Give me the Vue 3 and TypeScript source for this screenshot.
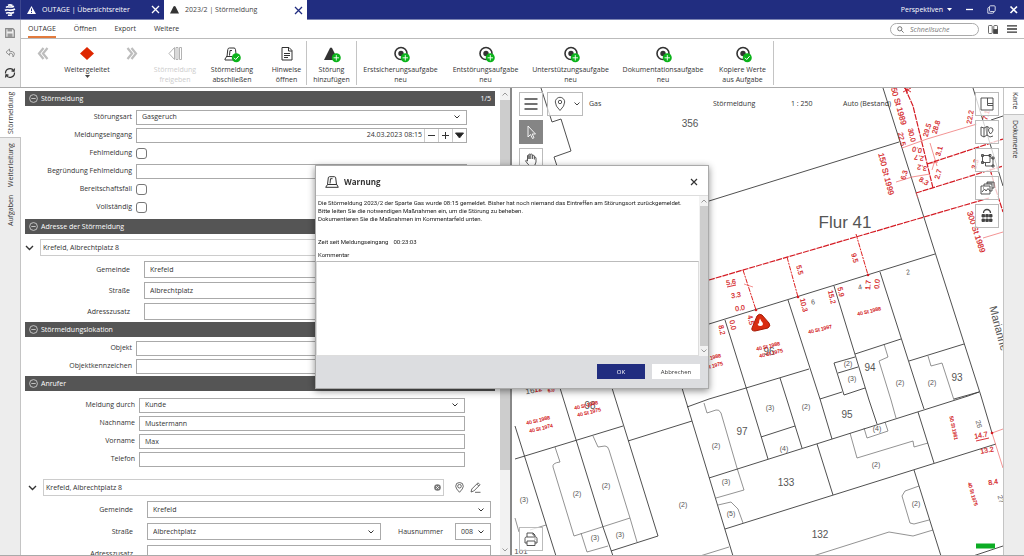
<script setup lang="ts">
import { ref } from 'vue'

interface Tool {
  icon: string
  lines: string[]
  disabled?: boolean
  drop?: boolean
  badge?: 'plus' | 'check'
  end?: boolean
}
interface MapLabel {
  x: number
  y: number
  t: string
  s: number
  r: number
}

const tools: Tool[] = [
  { icon: 'back', lines: [], disabled: true },
  { icon: 'diamond', lines: ['Weitergeleitet'], drop: true },
  { icon: 'forward', lines: [], disabled: true },
  { icon: 'release', lines: ['Störmeldung', 'freigeben'], disabled: true },
  { icon: 'siren', lines: ['Störmeldung', 'abschließen'], badge: 'check' },
  { icon: 'doc', lines: ['Hinweise', 'öffnen'], end: true },
  { icon: 'tri', lines: ['Störung', 'hinzufügen'], badge: 'plus', end: true },
  { icon: 'target', lines: ['Erstsicherungsaufgabe', 'neu'], badge: 'plus' },
  { icon: 'target', lines: ['Entstörungsaufgabe', 'neu'], badge: 'plus' },
  { icon: 'target', lines: ['Unterstützungsaufgabe', 'neu'], badge: 'plus' },
  { icon: 'target', lines: ['Dokumentationsaufgabe', 'neu'], badge: 'plus' },
  { icon: 'target', lines: ['Kopiere Werte', 'aus Aufgabe'], badge: 'check', end: true },
]

const search = ref('')
const comment = ref('')
const dialogOpen = ref(true)
const kind = ref('Gasgeruch')
const received = ref('24.03.2023 08:15')
const falseAlarm = ref(false)
const reason = ref('')
const standby = ref(false)
const complete = ref(false)
const address = ref('Krefeld, Albrechtplatz 8')
const callerAddress = ref('Krefeld, Albrechtplatz 8')

const parcels: string[] = [
  'M541 88 552 122 561 119 571 151 554 157 557 166',
  'M709 201 899 142',
  'M883 88 933 246 981 396 992 433',
  'M973 88 1003 186',
  'M991 120 1003 116',
  'M709 324 935 254',
  'M725 320 750 400 768 459',
  'M788 300 820 399 832 439',
  'M834 286 869 400 877 424',
  'M880 272 921 400 924 409',
  'M687 407 709 399 746 388 809 369',
  'M820 399 842 392',
  'M858 367 838 373M855 357 834 363 844 395 865 388',
  'M855 354 901 339',
  'M909 361 964 344',
  'M954 399 979 392',
  'M780 378 787 400 802 448',
  'M709 478 968 396 979 392',
  'M725 529 996 444',
  'M682 388 733 556',
  'M817 444 833 495',
  'M761 437 795 426',
  'M918 412 934 463',
  'M914 470 941 556',
  'M973 556 1003 546',
  'M515 426 556 556',
  'M515 459 623 426',
  'M560 388 603 527 613 556',
  'M612 388 658 536 611 551',
  'M628 441 692 421',
]
const buildings: string[] = [
  'M884 344 888 357 879 361 891 400 896 418',
  'M928 356 931 366 942 363 954 400',
  'M704 403 707 413 716 410Q719 409 721 413L737 468 744 490 716 498',
  'M718 505 731 502 738 509 743 523',
  'M850 433 857 458 913 441 914 447 928 443',
  'M864 428 867 438 888 431 885 422',
  'M919 486 905 491 902 496 910 523 914 524 929 520',
  'M813 556 889 532 913 536 933 530',
  'M700 556 729 547',
  'M555 447 560 462Q552 463 553 467L574 536 630 518',
  'M593 436 598 447 605 446Q608 446 609 450L630 518 637 542',
  'M581 533 587 552 608 546',
  'M515 518 519 532M530 530 546 525',
]
const mains: string[] = [
  'M709 280 989 198',
  'M916 193 1003 166',
  'M927 164 1003 139',
  'M905 88 913 106 933 188',
  'M990 169 996 190 1003 212',
]
const branches: string[] = [
  'M856 234 868 275',
  'M787 257 798 297',
  'M743 270 756 310',
]
const thin: string[] = [
  'M902 148 927 139 977 124',
  'M983 238 1003 232',
  'M992 433 1003 429',
  'M992 433 1003 468',
  'M896 182 912 177 930 174',
  'M744 284 753 287',
  'M916 193 918 198',
  'M927 164 938 162M930 143 937 166M932 170 935 160',
]
const blackLabels: MapLabel[] = [
  { x: 690, y: 123, t: '356', s: 10, r: 0 },
  { x: 845, y: 222, t: 'Flur 41', s: 17, r: 0 },
  { x: 813, y: 302, t: '6', s: 7, r: -10 },
  { x: 860, y: 287, t: '4', s: 7, r: -10 },
  { x: 908, y: 272, t: '2', s: 7, r: -10 },
  { x: 769, y: 351, t: '96', s: 10, r: 0 },
  { x: 590, y: 405, t: '98', s: 10, r: 0 },
  { x: 870, y: 367, t: '94', s: 10, r: 0 },
  { x: 957, y: 377, t: '93', s: 10, r: 0 },
  { x: 847, y: 414, t: '95', s: 10, r: 0 },
  { x: 742, y: 431, t: '97', s: 10, r: 0 },
  { x: 786, y: 482, t: '133', s: 10, r: 0 },
  { x: 820, y: 534, t: '132', s: 10, r: 0 },
  { x: 521, y: 551, t: '101', s: 8, r: 0 },
  { x: 530, y: 391, t: '16', s: 8, r: -10 },
  { x: 848, y: 363, t: '(2)', s: 7, r: 0 },
  { x: 852, y: 378, t: '(3)', s: 7, r: 0 },
  { x: 900, y: 382, t: '(2)', s: 7, r: 0 },
  { x: 932, y: 382, t: '(2)', s: 7, r: 0 },
  { x: 770, y: 407, t: '(3)', s: 7, r: 0 },
  { x: 806, y: 406, t: '(2)', s: 7, r: 0 },
  { x: 716, y: 445, t: '(2)', s: 7, r: 0 },
  { x: 784, y: 448, t: '(4)', s: 7, r: 0 },
  { x: 877, y: 428, t: '(4)', s: 7, r: 0 },
  { x: 876, y: 464, t: '(2)', s: 7, r: 0 },
  { x: 726, y: 481, t: '(3)', s: 7, r: 0 },
  { x: 731, y: 513, t: '(5)', s: 7, r: 0 },
  { x: 916, y: 503, t: '(2)', s: 7, r: 0 },
  { x: 524, y: 499, t: '(3)', s: 7, r: 0 },
  { x: 577, y: 493, t: '(2)', s: 7, r: 0 },
  { x: 606, y: 485, t: '(2)', s: 7, r: 0 },
  { x: 683, y: 504, t: '(2)', s: 7, r: 0 },
  { x: 595, y: 537, t: '(3)', s: 7, r: 0 },
  { x: 620, y: 534, t: '(3)', s: 7, r: 0 },
  { x: 979, y: 424, t: '26', s: 7, r: 74 },
  { x: 1001, y: 499, t: '27', s: 7, r: 74 },
]
const redLabels: MapLabel[] = [
  { x: 886, y: 174, t: '150 St 1999', s: 8, r: 76 },
  { x: 898, y: 104, t: '150 St 1989', s: 8, r: 74 },
  { x: 976, y: 232, t: '300 St 1989', s: 8, r: 72 },
  { x: 904, y: 175, t: '6.3', s: 7, r: -76 },
  { x: 902, y: 139, t: '22.5', s: 7, r: 76 },
  { x: 912, y: 135, t: '30.0', s: 7, r: 76 },
  { x: 927, y: 130, t: '29.5', s: 7, r: -74 },
  { x: 936, y: 127, t: '28.8', s: 7, r: -74 },
  { x: 970, y: 117, t: '22.2', s: 7, r: -80 },
  { x: 986, y: 115, t: '7.1', s: 7, r: -74 },
  { x: 917, y: 150, t: '0.0', s: 7, r: 190 },
  { x: 919, y: 158, t: '2.7', s: 7, r: 190 },
  { x: 922, y: 168, t: '3.2', s: 7, r: 190 },
  { x: 924, y: 181, t: '8.3', s: 7, r: 30 },
  { x: 939, y: 151, t: '3.1', s: 7, r: -74 },
  { x: 938, y: 174, t: '2.7', s: 7, r: -74 },
  { x: 975, y: 164, t: '3.3', s: 7, r: -74 },
  { x: 731, y: 282, t: '5.6', s: 7, r: -8 },
  { x: 736, y: 295, t: '3.3', s: 7, r: -8 },
  { x: 740, y: 308, t: '0.0', s: 7, r: -8 },
  { x: 800, y: 270, t: '5.5', s: 7, r: 74 },
  { x: 855, y: 258, t: '9.5', s: 7, r: 74 },
  { x: 868, y: 285, t: '1.7', s: 7, r: -84 },
  { x: 877, y: 284, t: '0.0', s: 7, r: -84 },
  { x: 832, y: 297, t: '15.2', s: 7, r: 76 },
  { x: 841, y: 292, t: '5.9', s: 7, r: 76 },
  { x: 804, y: 305, t: '10.3', s: 7, r: 76 },
  { x: 722, y: 330, t: '8.2', s: 7, r: 76 },
  { x: 733, y: 325, t: '0.0', s: 7, r: 76 },
  { x: 751, y: 320, t: '4.5', s: 7, r: 76 },
  { x: 869, y: 311, t: '40 St 1988', s: 5, r: -14 },
  { x: 820, y: 329, t: '40 St 1997', s: 5, r: -14 },
  { x: 768, y: 346, t: '40 St 1988', s: 5, r: -14 },
  { x: 771, y: 353, t: '40 St 1975', s: 5, r: -14 },
  { x: 709, y: 358, t: '40 St 1988', s: 5, r: -14 },
  { x: 711, y: 366, t: '40 St 1975', s: 5, r: -14 },
  { x: 538, y: 420, t: '40 St 1988', s: 5, r: -14 },
  { x: 541, y: 428, t: '40 St 1974', s: 5, r: -14 },
  { x: 586, y: 405, t: '40 St 1988', s: 5, r: -14 },
  { x: 589, y: 412, t: '40 St 1975', s: 5, r: -14 },
  { x: 954, y: 428, t: '50 St 1961', s: 5, r: 78 },
  { x: 973, y: 494, t: '40 St 1975', s: 5, r: 74 },
  { x: 981, y: 435, t: '14.7', s: 7, r: -10 },
  { x: 987, y: 450, t: '13.2', s: 7, r: -10 },
  { x: 993, y: 482, t: '8.4', s: 7, r: -10 },
  { x: 538, y: 389, t: '12', s: 7, r: -10 },
  { x: 551, y: 390, t: '6.0', s: 5, r: -10 },
]
const turn = (l: MapLabel): string => `rotate(${l.r} ${l.x} ${l.y})`
</script>

<template>
  <div class="app">
    <header class="titlebar">
      <div class="logo">
        <svg width="12" height="12" viewBox="0 0 12 12" fill="none" stroke="#fff" stroke-width="1.6">
          <path d="M2 3.5C4 1.5 5.500 4.500 10 2.200M1 6.500C4 4.200 6 8 11 5M2 9.200C5 7.500 6.500 10.500 10 8.300M4 1.300Q6 .4 8.500 1.500M4 11Q6 11.700 8 10.800" />
        </svg>
      </div>
      <div class="doc-tab">
        <svg width="9" height="8" viewBox="0 0 9 8"><path d="M4.500 0 9 8H0Z" fill="#fff" /><path d="M4.500 2.500V5.200M4.500 6V7" stroke="#212d80" /></svg>
        <span>OUTAGE | Übersichtsreiter</span>
        <button type="button" aria-label="Reiter schließen"><svg width="9" height="9" viewBox="0 0 9 9"><path d="M1 1 8 8M8 1 1 8" stroke="currentColor" stroke-width="1.300" /></svg></button>
      </div>
      <div class="doc-tab active">
        <svg width="9" height="8" viewBox="0 0 9 8"><path d="M3.500 .5Q4.500-.3 5.500 .5L9 7.500H0Z" fill="#333" /></svg>
        <span>2023/2 | Störmeldung</span>
        <button type="button" aria-label="Reiter schließen"><svg width="9" height="9" viewBox="0 0 9 9"><path d="M1 1 8 8M8 1 1 8" stroke="currentColor" stroke-width="1.300" /></svg></button>
      </div>
      <div class="window-tools">
        <button type="button" class="persp">Perspektiven <svg width="5" height="3" viewBox="0 0 5 3"><path d="M0 0H5L2.500 3Z" fill="#fff" /></svg></button>
        <button type="button" aria-label="Minimieren"><svg width="9" height="9" viewBox="0 0 9 9"><path d="M1 4.500H8" stroke="#fff" stroke-width="1.300" /></svg></button>
        <button type="button" aria-label="Wiederherstellen"><svg width="9" height="9" viewBox="0 0 9 9" fill="none" stroke="#fff" stroke-width=".8"><rect x="2.500" y=".8" width="5.700" height="5.700" rx="1" /><path d="M2 2.500Q.8 2.500 .8 3.500V8.200H5.500Q6.800 8.200 6.800 7" /></svg></button>
        <button type="button" aria-label="Schließen"><svg width="9" height="9" viewBox="0 0 9 9"><path d="M1.500 1.500 8 8M8 1.500 1.500 8" stroke="#fff" stroke-width="1.700" /></svg></button>
      </div>
    </header>

    <div class="commands">
      <div class="quick">
        <button type="button" aria-label="Speichern"><svg width="10" height="10" viewBox="0 0 10 10"><path d="M.7 .7H7.800L9.300 2.200V9.300H.7Z" fill="none" stroke="#8b8b8b" stroke-width="1.300" /><path d="M2.500 1H7V3.500H2.500ZM2.500 5.500H7.500V9H2.500Z" fill="#999" /></svg></button>
        <button type="button" aria-label="Rückgängig"><svg width="11" height="10" viewBox="0 0 11 10"><path d="M4.500 1 1 4.200 4.500 7.300V5.300Q8.300 4.500 8 9Q12 3.500 4.500 3.200Z" fill="none" stroke="#888" stroke-width=".9" /></svg></button>
        <button type="button" aria-label="Aktualisieren"><svg width="12" height="12" viewBox="0 0 12 12" fill="none" stroke="#333" stroke-width="1.200"><path d="M1.500 6.500A4.500 4.500 0 0 1 9.800 3.800M10.500 5.500A4.500 4.500 0 0 1 2.200 8.200M10.500 1.500 10 4.300 7.500 3.800M1.500 10.500 2 7.700 4.500 8.200" /></svg></button>
      </div>
      <div class="command-main">
        <nav class="menu">
          <a href="#" class="current">OUTAGE</a><a href="#">Öffnen</a><a href="#">Export</a><a href="#">Weitere</a>
          <div class="menu-right">
            <label class="search">
              <svg width="7" height="7" viewBox="0 0 7 7" fill="none" stroke="#555" stroke-width=".8"><circle cx="2.800" cy="2.800" r="2.100" /><path d="M4.400 4.400 6.600 6.600" /></svg>
              <input v-model="search" type="text" placeholder="Schnellsuche" aria-label="Schnellsuche" />
            </label>
            <button type="button" aria-label="Layout"><svg width="10" height="9" viewBox="0 0 10 9" fill="none" stroke="#444" stroke-width=".8"><rect x=".5" y=".5" width="3.700" height="8" rx=".8" /><path d="M5.800 4V1.200Q5.800 .5 6.500 .5H8.800Q9.500 .5 9.500 1.200V4" /><rect x="5.600" y="4.500" width="4" height="4" fill="#444" /></svg></button>
            <button type="button" aria-label="Menü"><svg width="10" height="8" viewBox="0 0 10 8" stroke="#333" stroke-width="1.300"><path d="M0 .8H10M0 4H10M0 7.200H10" /></svg></button>
          </div>
        </nav>
        <div class="ribbon">
          <button v-for="(tool, i) in tools" :key="i" type="button" class="tool" :class="{ end: tool.end, off: tool.disabled }" :disabled="tool.disabled" :aria-label="tool.lines.join(' ') || tool.icon">
            <svg class="tool-icon" width="18" height="18" viewBox="0 0 18 18" fill="none">
              <g v-if="tool.icon === 'back'" stroke="#bdbdbd" stroke-width="2.200"><path d="M9.500 3 5 8.500 9.500 14M13.500 3 9 8.500 13.500 14" /></g>
              <g v-else-if="tool.icon === 'forward'" stroke="#bdbdbd" stroke-width="2.200"><path d="M5.500 3 10 8.500 5.500 14M9.500 3 14 8.500 9.500 14" /></g>
              <path v-else-if="tool.icon === 'diamond'" d="M9 2 16 8.500 9 15 2 8.500Z" fill="#de2600" />
              <g v-else-if="tool.icon === 'release'" stroke="#aaa" stroke-width=".9"><path d="M8.500 2.500V14.500L3 8.500ZM10 2.500H12V14.500H10ZM13.500 2.500H15.500V14.500H13.500Z" /></g>
              <g v-else-if="tool.icon === 'siren'" stroke="#333" stroke-width="1"><path d="M4 11.500 4.800 4.500Q5 3 6.500 3H11Q12.300 3 12.500 4.500L13 9M4 11 2 14V15H12M6.500 10.500 7 5.500H9M3.500 11.500H9" /></g>
              <g v-else-if="tool.icon === 'doc'" stroke="#333" stroke-width="1"><path d="M4 2.500H11L14 5.500V15H4ZM10.500 2.500V6H14M6 8.500H12M6 10.500H12M6 12.500H10" /></g>
              <path v-else-if="tool.icon === 'tri'" d="M7 3Q8 2 9 3L15 15H1Z" fill="#333" />
              <g v-else><circle cx="9" cy="8.500" r="6" stroke="#333" stroke-width="1.600" /><circle cx="9" cy="8.500" r="2.700" fill="#333" /></g>
              <g v-if="tool.badge">
                <circle cx="13.300" cy="12.800" r="4.500" fill="#0bb31a" />
                <path v-if="tool.badge === 'plus'" d="M13.300 10.100V15.500M10.600 12.800H16" stroke="#fff" stroke-width=".9" />
                <path v-else d="M11 12.800 12.700 14.500 15.700 11.200" stroke="#fff" stroke-width="1" />
              </g>
            </svg>
            <span v-for="line in tool.lines" :key="line">{{ line }}</span>
            <svg v-if="tool.drop" width="5" height="3" viewBox="0 0 5 3"><path d="M0 0H5L2.500 3Z" fill="#444" /></svg>
          </button>
        </div>
      </div>
    </div>

    <main class="workspace">
      <nav class="side left">
        <button type="button" class="on">Störmeldung</button>
        <button type="button">Weiterleitung</button>
        <button type="button">Aufgaben</button>
      </nav>

      <form class="panel" @submit.prevent>
        <section>
          <h2><svg class="fold" viewBox="0 0 9 9"><circle cx="4.500" cy="4.500" r="3.900" /><path d="M2.300 4.500H6.700" /></svg>Störmeldung<em>1/5</em></h2>
          <div class="rows">
            <div class="row"><label for="kind">Störungsart</label><div class="select field"><select id="kind" v-model="kind"><option>Gasgeruch</option></select><svg class="chev" viewBox="0 0 6 4"><path d="M.5 .5 3 3 5.500 .5" /></svg></div></div>
            <div class="row"><label for="received">Meldungseingang</label>
              <div class="field stepper">
                <input id="received" v-model="received" type="text" />
                <button type="button" aria-label="Früher"><svg viewBox="0 0 9 9"><path d="M1 4.500H8" /></svg></button>
                <button type="button" aria-label="Später"><svg viewBox="0 0 9 9"><path d="M1 4.500H8M4.500 1V8" /></svg></button>
                <button type="button" aria-label="Kalender"><svg viewBox="0 0 9 9"><path d="M.5 2H8.500L4.500 7Z" fill="#222" /></svg></button>
              </div>
            </div>
            <div class="row"><label for="false">Fehlmeldung</label><input id="false" v-model="falseAlarm" type="checkbox" /></div>
            <div class="row"><label for="reason">Begründung Fehlmeldung</label><input id="reason" v-model="reason" class="field" type="text" /></div>
            <div class="row"><label for="standby">Bereitschaftsfall</label><input id="standby" v-model="standby" type="checkbox" /></div>
            <div class="row"><label for="complete">Vollständig</label><input id="complete" v-model="complete" type="checkbox" /></div>
          </div>
        </section>

        <section>
          <h2><svg class="fold" viewBox="0 0 9 9"><circle cx="4.500" cy="4.500" r="3.900" /><path d="M2.300 4.500H6.700" /></svg>Adresse der Störmeldung</h2>
          <div class="address">
            <div class="address-head"><button type="button" aria-label="Adresse einklappen"><svg width="9" height="6" viewBox="0 0 9 6"><path d="M1 1 4.500 4.500 8 1" fill="none" stroke="#333" stroke-width="1.400" /></svg></button><input v-model="address" class="light" type="text" aria-label="Adresse" /><i class="head-space"></i></div>
            <div class="address-row"><label for="city">Gemeinde</label><input id="city" type="text" value="Krefeld" /></div>
            <div class="address-row"><label for="street">Straße</label><input id="street" type="text" value="Albrechtplatz" /></div>
            <div class="address-row"><label for="extra">Adresszusatz</label><input id="extra" type="text" /></div>
          </div>
        </section>

        <section>
          <h2><svg class="fold" viewBox="0 0 9 9"><circle cx="4.500" cy="4.500" r="3.900" /><path d="M2.300 4.500H6.700" /></svg>Störmeldungslokation</h2>
          <div class="rows short">
            <div class="row"><label for="object">Objekt</label><input id="object" class="field" type="text" /></div>
            <div class="row"><label for="mark">Objektkennzeichen</label><input id="mark" class="field" type="text" /></div>
          </div>
        </section>

        <section>
          <h2><svg class="fold" viewBox="0 0 9 9"><circle cx="4.500" cy="4.500" r="3.900" /><path d="M2.300 4.500H6.700" /></svg>Anrufer</h2>
          <div class="rows caller">
            <div class="row"><label for="by">Meldung durch</label><div class="select field"><select id="by"><option>Kunde</option></select><svg class="chev" viewBox="0 0 6 4"><path d="M.5 .5 3 3 5.500 .5" /></svg></div></div>
            <div class="row"><label for="last">Nachname</label><input id="last" class="field" type="text" value="Mustermann" /></div>
            <div class="row"><label for="first">Vorname</label><input id="first" class="field" type="text" value="Max" /></div>
            <div class="row"><label for="phone">Telefon</label><input id="phone" class="field" type="text" /></div>
          </div>
          <div class="address caller">
            <div class="address-head">
              <button type="button" aria-label="Adresse einklappen"><svg width="9" height="6" viewBox="0 0 9 6"><path d="M1 1 4.500 4.500 8 1" fill="none" stroke="#333" stroke-width="1.400" /></svg></button>
              <div class="light clearable"><input v-model="callerAddress" type="text" aria-label="Adresse des Anrufers" /><button type="button" aria-label="Leeren"><svg width="7" height="7" viewBox="0 0 7 7"><circle cx="3.500" cy="3.500" r="3.300" fill="#777" /><path d="M2.200 2.200 4.800 4.800M4.800 2.200 2.200 4.800" stroke="#fff" stroke-width=".9" /></svg></button></div>
              <div class="head-space">
                <button type="button" aria-label="Auf Karte zeigen"><svg width="9" height="11" viewBox="0 0 9 11" fill="none" stroke="#444" stroke-width=".8"><path d="M4.500 10.300Q.7 6.500 .7 4.300A3.800 3.800 0 0 1 8.300 4.300Q8.300 6.500 4.500 10.300Z" /><circle cx="4.500" cy="4.200" r="1.800" /></svg></button>
                <button type="button" aria-label="Bearbeiten"><svg width="11" height="11" viewBox="0 0 11 11" fill="none" stroke="#444" stroke-width=".8"><path d="M1 10 1.800 7 8 .8 10 2.800 3.800 9ZM5 10.300H10.500M6.800 2 8.800 4" /></svg></button>
              </div>
            </div>
            <div class="address-row"><label for="ccity">Gemeinde</label><div class="select"><select id="ccity"><option>Krefeld</option></select><svg class="chev" viewBox="0 0 6 4"><path d="M.5 .5 3 3 5.500 .5" /></svg></div></div>
            <div class="address-row"><label for="cstreet">Straße</label><div class="select"><select id="cstreet"><option>Albrechtplatz</option></select><svg class="chev" viewBox="0 0 6 4"><path d="M.5 .5 3 3 5.500 .5" /></svg></div><label for="number" class="house">Hausnummer</label><div class="select number"><select id="number"><option>008</option></select><svg class="chev" viewBox="0 0 6 4"><path d="M.5 .5 3 3 5.500 .5" /></svg></div></div>
            <div class="address-row"><label for="cextra">Adresszusatz</label><input id="cextra" type="text" /></div>
          </div>
        </section>
      </form>
      <div class="scroll"><svg viewBox="0 0 6 4"><path d="M.5 3.500 3 1 5.500 3.500" /></svg><i></i><b></b><svg viewBox="0 0 6 4"><path d="M.5 .5 3 3 5.500 .5" /></svg></div>

      <div class="map">
        <svg class="plan" viewBox="512 88 491 468" preserveAspectRatio="xMinYMin slice" fill="none">
          <path v-for="d in buildings" :key="d" :d="d" stroke="#777" stroke-width=".8" />
          <path v-for="d in parcels" :key="d" :d="d" stroke="#3c3c3c" stroke-width=".9" />
          <path v-for="d in thin" :key="d" :d="d" stroke="#e66" stroke-width=".7" />
          <path v-for="d in branches" :key="d" :d="d" stroke="#d22" stroke-dasharray="5 1 2 1" />
          <path v-for="d in mains" :key="d" :d="d" stroke="#d41c24" stroke-width="1.200" stroke-dasharray="6 1" />
          <g fill="#d41c24"><circle cx="868" cy="275" r="1.300" /><circle cx="798" cy="297" r="1.300" /><circle cx="756" cy="310" r="1.300" /><circle cx="992" cy="433" r="1.300" /></g>
          <g class="labels">
            <text v-for="(l, i) in blackLabels" :key="i" :x="l.x" :y="l.y" :font-size="l.s" :transform="turn(l)" fill="#555">{{ l.t }}</text>
            <text x="993" y="306" font-size="11" transform="rotate(75 993 306)" fill="#555" class="start">Marianne</text>
          </g>
          <g class="labels red">
            <text v-for="(l, i) in redLabels" :key="i" :x="l.x" :y="l.y" :font-size="l.s" :transform="turn(l)">{{ l.t }}</text>
          </g>
          <path d="M903 92 911 88M904 88 911 92M907 88V94M727 287 736 285M976 441 989 438" stroke="#d41c24" stroke-width=".9" />
          <path d="M757 316Q759 313 762 315L769 323Q771 326 768 328L755 331Q751 331 752 328Z" fill="#d92c10" stroke="#a51c08" />
          <path d="M760 318.500Q761 321 762.800 323Q763.500 326 760.300 326Q757 326 758 323L759 324Q758.800 321 760 318.500Z" fill="#fff" />
          <path d="M976 543.500H995V548.500H976Z" fill="#0cac24" />
        </svg>
        <div class="map-top">
          <button type="button" class="sq" aria-label="Kartenmenü"><svg viewBox="0 0 18 18"><path d="M2.500 4H15.500M2.500 9H15.500M2.500 14H15.500" stroke-width="1.300" /></svg></button>
          <button type="button" class="sq wide" aria-label="Sparte"><svg viewBox="0 0 18 18"><path d="M9 15.500Q4.300 11 4.300 7A4.700 4.700 0 0 1 13.700 7Q13.700 11 9 15.500Z" /><circle cx="9" cy="7" r="1.700" /></svg><svg class="chev" viewBox="0 0 6 4"><path d="M.5 .5 3 3 5.500 .5" /></svg></button>
          <span>Gas</span><span>Störmeldung</span><span>1 : 250</span><span>Auto (Bestand)</span>
        </div>
        <div class="map-left">
          <button type="button" class="sq dark" aria-label="Auswahl"><svg viewBox="0 0 18 18"><path d="M6 3V14L8.500 11.500 10.500 15.500 12 14.700 10.200 11H13.500Z" stroke="#fff" /></svg></button>
          <button type="button" class="sq" aria-label="Verschieben"><svg viewBox="0 0 18 18"><path d="M5.500 10V4.500Q6.200 3.300 7 4.500V8M7 8V3.500Q8 2.300 8.800 3.500V8M8.800 3.500Q9.800 2.500 10.600 3.800V8M10.600 4.500Q11.800 3.700 12.400 5V8.500M12.400 6Q13.700 5.700 14 7V11Q13.500 15 10.500 15.500H8.500Q6 14 3.500 9.800Q4.500 8.700 5.500 10" /></svg></button>
        </div>
        <button type="button" class="sq print" aria-label="Drucken"><svg viewBox="0 0 18 18"><path d="M5 7V3H11L13 5V7M5 13H3V8.500Q3 7 4.500 7H13.500Q15 7 15 8.500V13H13M5 11H13V15.500H5ZM12.500 9H13.500M11 3V5H13" /></svg></button>
        <div class="map-right">
          <button type="button" class="sq" aria-label="Übersichtskarte"><svg viewBox="0 0 18 18"><path d="M3 3H15V15H3ZM9.500 3V8.500H15M9.500 8.500V10.500H15" /></svg></button>
          <button type="button" class="sq" aria-label="Kartenansicht"><svg viewBox="0 0 18 18"><path d="M9 12 6 14 3 12.500V4L6 5 9 3.500 11 4.500M6 5V14M9 3.500V12L12 14 15 13M12.500 11Q10.500 8.500 10.500 7A2.200 2.200 0 0 1 15 7Q15 8.500 12.500 11Z" /></svg></button>
          <button type="button" class="sq" aria-label="Objekt bearbeiten"><svg viewBox="0 0 18 18"><path d="M4.500 4.500H12V11.500H4.500ZM3.500 3.500H5.500V5.500H3.500ZM11 3.500H13V5.500H11ZM3.500 10.500H5.500V12.500H3.500ZM7.500 12V15H15V7H12.500M14 6H16V8H14ZM14 14H16V16H14Z" /></svg></button>
          <button type="button" class="sq" aria-label="Bilder"><svg viewBox="0 0 18 18"><path d="M3 7H12V15H3ZM6 7V5H14V12H12M9 5V3H16V9H14M4 13 6.500 10 8 12 10 9.500 12 12M5 9H6M10 3V5M12 3V5M14 3V5" /></svg></button>
          <button type="button" class="sq" aria-label="Raster"><svg viewBox="0 0 18 18"><path d="M5.500 6A3.500 3.500 0 0 1 12.500 6" stroke-width="1.300" /><path d="M4 7.500H6.500V10H4ZM7.800 7.500H10.300V10H7.800ZM11.500 7.500H14V10H11.500ZM4 12H6.500V14.500H4ZM7.800 12H10.300V14.500H7.800ZM11.500 12H14V14.500H11.500Z" fill="#444" /></svg></button>
        </div>
      </div>

      <nav class="side right">
        <button type="button" class="on">Karte</button>
        <button type="button">Dokumente</button>
      </nav>
    </main>

    <div v-if="dialogOpen" class="overlay">
      <div class="dialog" role="dialog" aria-labelledby="dialog-title">
        <div class="dialog-head">
          <svg width="14" height="12" viewBox="0 0 14 12" fill="none" stroke="#333" stroke-width="1"><path d="M2.500 8.500 3.300 1.800Q3.500 .7 4.600 .7H9.400Q10.500 .7 10.700 1.800L11.500 8.500M5 7.500 5.500 2.700H7.500M2.500 8.500H11.800L13.300 11.300H.7Z" /></svg>
          <h1 id="dialog-title">Warnung</h1>
          <button type="button" aria-label="Schließen" @click="dialogOpen = false"><svg width="8" height="8" viewBox="0 0 8 8"><path d="M1 1 7 7M7 1 1 7" stroke="#333" stroke-width="1.200" /></svg></button>
        </div>
        <div class="dialog-body">
          <div class="dialog-text">
            <p>Die Störmeldung 2023/2 der Sparte Gas wurde 08:15 gemeldet. Bisher hat noch niemand das Eintreffen am Störungsort zurückgemeldet.<br />Bitte leiten Sie die notwendigen Maßnahmen ein, um die Störung zu beheben.<br />Dokumentieren Sie die Maßnahmen im Kommentarfeld unten.</p>
            <p class="time"><span>Zeit seit Meldungseingang</span><span>00:23:03</span></p>
            <label for="comment">Kommentar</label>
            <textarea id="comment" v-model="comment"></textarea>
          </div>
          <div class="scroll small"><svg viewBox="0 0 6 4"><path d="M.5 3.500 3 1 5.500 3.500" /></svg><i></i><svg viewBox="0 0 6 4"><path d="M.5 .5 3 3 5.500 .5" /></svg></div>
        </div>
        <div class="dialog-foot">
          <button type="button" class="primary" @click="dialogOpen = false">OK</button>
          <button type="button" @click="dialogOpen = false">Abbrechen</button>
        </div>
      </div>
    </div>
  </div>
</template>

<style>
html, body { height: 100%; margin: 0; }
#app { height: 100%; }
</style>

<style scoped>
* { box-sizing: border-box; }
.app { height: 100vh; display: flex; flex-direction: column; overflow: hidden; background: #fff; color: #333; font: 7px/10px "Open Sans", "Noto Sans", sans-serif; }
button, input, select, textarea { font: inherit; color: inherit; margin: 0; padding: 0; border: 0; border-radius: 0; background: none; }
button { display: flex; align-items: center; justify-content: center; white-space: nowrap; }
input, select { min-width: 0; }
svg { flex: none; display: block; }
h1, h2, p { margin: 0; }
a { color: inherit; text-decoration: none; }

.titlebar { height: 20px; flex: none; display: flex; background: #212d80; color: #fff; border-bottom: 1px solid #7d84b3; }
.logo { width: 21px; display: flex; align-items: center; justify-content: center; border-right: 1px solid #3d478f; }
.doc-tab { width: 143px; display: flex; align-items: center; padding: 0 4px 0 6px; gap: 6px; }
.doc-tab span { flex: 1; white-space: nowrap; }
.doc-tab.active { background: #fff; color: #444; margin-bottom: -1px; }
.doc-tab.active button { color: #212d80; }
.window-tools { margin-left: auto; display: flex; align-items: center; gap: 13px; padding-right: 6px; }
.persp { gap: 4px; }

.commands { display: flex; flex: none; height: 68px; border-bottom: 1px solid #aaa; }
.quick { width: 21px; background: #ededed; border-right: 1px solid #c4c4c4; display: flex; flex-direction: column; align-items: center; gap: 9px; padding-top: 7px; }
.quick button { height: 11px; }
.command-main { flex: 1; min-width: 0; }
.menu { height: 19px; display: flex; gap: 18px; padding-left: 7px; border-bottom: 1px solid #bbb; line-height: 17px; }
.menu a.current { border-bottom: 2px solid #e27a3c; }
.menu-right { margin-left: auto; display: flex; align-items: center; gap: 9px; padding-right: 7px; }
.search { display: flex; align-items: center; gap: 6px; width: 89px; height: 13px; border: 1px solid #aaa; border-radius: 7px; padding: 0 6px; }
.search input { flex: 1; height: 11px; outline: 0; font-style: italic; }
.search input::placeholder { color: #777; }
.ribbon { display: grid; grid-template-columns: 44px 44px 44px 44px 70px 40px 50px 87px 83px 87px 98px 62px; padding-top: 2px; }
.tool { flex-direction: column; justify-content: flex-start; height: 44px; padding-top: 4px; line-height: 10px; }
.tool-icon { margin-bottom: 2px; }
.tool.end { border-right: 1px solid #c4c4c4; }
.tool.off { color: #ccc; }

.workspace { flex: 1; min-height: 0; display: flex; border-bottom: 1px solid #aaa; }
.side { width: 21px; flex: none; background: #ededed; display: flex; flex-direction: column; }
.side button { writing-mode: vertical-rl; width: 21px; }
.side.left { border-right: 1px solid #c4c4c4; }
.side.left button { transform: rotate(180deg); height: 36px; }
.side.left button.on { height: 50px; border-top: 1px solid #c4c4c4; }
.side.left button.on + button { height: 54px; }
.side.left button.on, .side.right button.on { background: #fff; }
.side.right { border-left: 1px solid #c4c4c4; }
.side.right button { height: 48px; }
.side.right button.on { height: 27px; border-bottom: 1px solid #c4c4c4; }

.panel { flex: 470 1 0; min-width: 0; overflow: hidden; padding: 3px 4px 0; background: #fff; }
.panel h2 { height: 15px; display: flex; align-items: center; gap: 3px; padding: 0 4px; background: #555; color: #fff; font: inherit; }
.panel h2 em { margin-left: auto; font-style: normal; }
.fold { width: 9px; height: 9px; fill: none; stroke: #ddd; stroke-width: 0.8; }
.rows { padding: 2px 28px 3px 0; }
.rows.short { padding-bottom: 1px; }
.rows.caller { padding: 5px 30px 11px 3px; }
.row { display: grid; grid-template-columns: 107px 1fr; column-gap: 4px; align-items: center; height: 18px; }
.row label, .address-row label { text-align: right; }
.field { width: 100%; height: 15px; border: 1px solid #aaa; }
input.field { padding: 0 5px; }
.select { position: relative; display: flex; }
.select select { width: 100%; appearance: none; padding: 0 5px; }
.chev { width: 6px; height: 4px; fill: none; stroke: #333; stroke-width: 1; }
.select .chev { position: absolute; right: 6px; top: 50%; margin-top: -2px; pointer-events: none; }
.stepper { display: flex; }
.stepper input { flex: 1; text-align: right; padding-right: 2px; }
.stepper button { width: 14px; border-left: 1px solid #ccc; }
.stepper svg { width: 9px; height: 9px; stroke: #333; }
input[type="checkbox"] { appearance: none; width: 11px; height: 11px; border: 1px solid #777; border-radius: 3px; }
input[type="checkbox"]:checked { background: #212d80; }

.address { display: grid; gap: 4px; padding: 5px 4px 2px 0; }
.address.caller { gap: 5px; padding: 0 4px 0 3px; }
.address-head { display: flex; align-items: center; height: 17px; margin-bottom: 1px; }
.caller .address-head { margin-bottom: 0; }
.address-head > button { width: 8px; margin-right: 7px; }
.light { flex: 1; height: 17px; border: 1px solid #ccc; padding: 0 2px; }
.clearable { display: flex; }
.clearable input { flex: 1; }
.head-space { width: 47px; display: flex; gap: 6px; justify-content: center; }
.address-row { display: flex; height: 17px; align-items: center; }
.address-row > label:first-child { width: 105px; margin-right: 14px; }
.address-row > input, .address-row > .select { flex: 1; height: 17px; border: 1px solid #aaa; }
.address-row > input { padding: 0 5px; }
.address-row > .house { margin: 0 14px 0 17px; width: 43px; }
.address-row > .number { flex: 0 0 36px; }

.scroll { width: 13px; flex: none; display: flex; flex-direction: column; align-items: center; background: #f2f2f2; padding: 4px 0 3px; gap: 4px; border-right: 2px solid #888; border-left: 1px solid #fff; }
.scroll svg { width: 6px; height: 4px; fill: none; stroke: #999; }
.scroll i { flex: 373 1 0; width: 10px; background: #cdcdcd; }
.scroll b { flex: 70 1 0; }
.scroll.small { width: 9px; border: 0; padding: 3px 0; gap: 3px; }
.scroll.small i { flex: 1; width: 8px; }

.map { position: relative; flex: 491 1 0; min-width: 0; overflow: hidden; background: #fff; }
.plan { position: absolute; inset: 0; width: 100%; height: 100%; }
.labels text { font-family: "Liberation Sans Narrow", "Liberation Sans", Arial, sans-serif; text-anchor: middle; dominant-baseline: central; }
.labels text.start { text-anchor: start; }
.labels.red { fill: #d41c24; stroke: #d41c24; stroke-width: 0.2; }
.sq { width: 24px; height: 24px; border: 1px solid #bbb; background: rgba(255, 255, 255, 0.75); }
.sq svg { width: 18px; height: 18px; fill: none; stroke: #444; stroke-width: 0.9; }
.sq.wide { width: 36px; gap: 5px; }
.sq.wide .chev { width: 6px; height: 4px; stroke-width: 1; }
.sq.dark { background: #858585; border-color: #858585; }
.map-top { position: absolute; left: 7px; top: 4px; display: grid; grid-template-columns: 28px 42px 124px 78px 52px auto; align-items: center; white-space: nowrap; }
.map-left { position: absolute; left: 7px; top: 32px; display: grid; gap: 4px; }
.map-right { position: absolute; right: 4px; top: 4px; display: grid; gap: 4px; }
.print { position: absolute; left: 7px; bottom: 4px; }

.overlay { position: fixed; inset: 0; display: flex; align-items: center; justify-content: center; padding-bottom: 2px; }
.dialog { width: 394px; max-width: 100%; background: #fff; border: 1px solid #aaa; box-shadow: 0 2px 7px rgba(0, 0, 0, 0.45); }
.dialog-head { display: flex; align-items: center; gap: 5px; height: 30px; padding: 3px 10px 0 9px; border-bottom: 1px solid #ddd; }
.dialog-head h1 { flex: 1; font-size: 8px; line-height: 12px; font-weight: 700; }
.dialog-body { display: flex; height: 160px; font: 6px/8px Roboto, "Open Sans", sans-serif; color: #222; }
.dialog-text { flex: 1; min-width: 0; display: flex; flex-direction: column; padding-top: 3px; }
.dialog-text p, .dialog-text label { padding: 0 2px; white-space: nowrap; }
.dialog-text .time { display: flex; gap: 5px; margin: 15px 0 5px; }
.dialog-text textarea { flex: 1; margin-top: 2px; border: 1px solid #ddd; border-top-color: #bbb; resize: none; }
.dialog-foot { display: flex; justify-content: flex-end; gap: 7px; height: 32px; padding: 8px 8px; background: #dcdde0; }
.dialog-foot button { width: 48px; height: 15px; background: #fff; font-size: 6px; }
.dialog-foot .primary { background: #212d80; color: #fff; }
</style>
